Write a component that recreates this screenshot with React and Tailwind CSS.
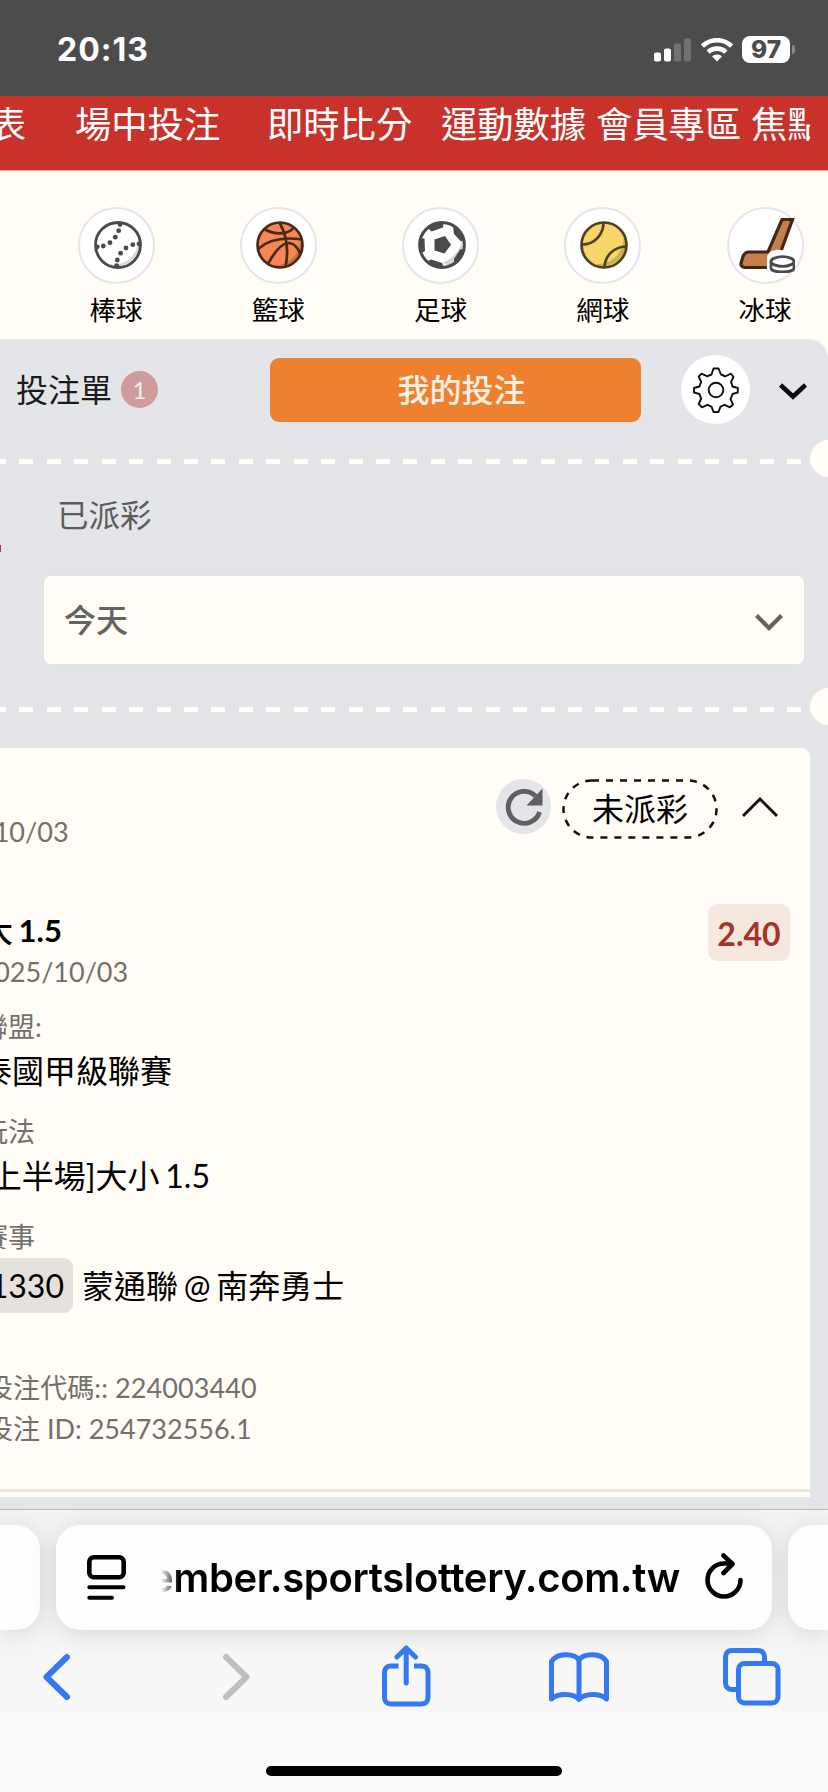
const navItems = [
  { label: "列表", cls: "w-[36px] justify-end mr-[49px]" },
  { label: "場中投注", cls: "w-[145px] mr-[47px]" },
  { label: "即時比分", cls: "w-[145px] mr-[29px]" },
  { label: "運動數據", cls: "w-[145px] mr-[10px]" },
  { label: "會員專區", cls: "w-[145px] mr-[10px]" },
  { label: "焦點", cls: "w-[59px]" },
];

const BaseballIcon = () => (
  <svg width="48" height="48" viewBox="0 0 48 48" fill="none">
    <circle cx="24" cy="24" r="22.5" fill="#fff" />
    <path d="M43 12A24 24 0 0 1 12 42A22.5 22.5 0 0 0 43 12Z" fill="#d6d6d6" />
    <circle cx="24" cy="24" r="22.5" stroke="#4a4a4a" strokeWidth="2.8" />
    <g fill="#4a4a4a">
      <circle cx="26" cy="3.5" r="2.4" />
      <circle cx="24.7" cy="9.7" r="2.4" />
      <circle cx="21.3" cy="16.2" r="2.4" />
      <circle cx="16" cy="21.7" r="2.4" />
      <circle cx="9.3" cy="25" r="2.4" />
      <circle cx="3.3" cy="25.8" r="2.4" />
      <circle cx="45" cy="22.8" r="2.4" />
      <circle cx="38.8" cy="23.7" r="2.4" />
      <circle cx="32" cy="27" r="2.4" />
      <circle cx="26.6" cy="32.2" r="2.4" />
      <circle cx="23.3" cy="39" r="2.4" />
      <circle cx="22.7" cy="44.6" r="2.4" />
    </g>
  </svg>
);

const BasketballIcon = () => (
  <svg width="48" height="48" viewBox="0 0 48 48" fill="none">
    <circle cx="24" cy="24" r="22.5" fill="#f48753" />
    <path d="M44 14A26 26 0 0 1 14 44A22.5 22.5 0 0 0 44 14Z" fill="#c9703f" />
    <g stroke="#4a2817" strokeWidth="2.7">
      <circle cx="24" cy="24" r="22.5" />
      <path d="M23.5 1.5C30 13 33 29 29.5 46" />
      <path d="M2 28C13 18 29 16 46 18.5" />
      <path d="M12.5 42C18 32 24 23 32 22C39 22 42 28 44.5 33" />
      <path d="M9 8.5C17 13 31 15 38 6.5" />
    </g>
  </svg>
);

const SoccerIcon = () => (
  <svg width="48" height="48" viewBox="0 0 48 48" fill="none">
    <circle cx="24" cy="24" r="22.5" fill="#fff" />
    <path d="M45 18L41 28L34 37L24 42L33 45L44 34Z" fill="#d6d6d6" />
    <circle cx="24" cy="24" r="22.4" stroke="#4a4a4a" strokeWidth="3" />
    <g fill="#4a4a4a">
      <path d="M16.500 18.500L27 15L33 23.800L26.500 32.500L16.500 29.500Z" />
      <path d="M9 6.500L13.500 10.500L25 6.500L25.500 2L17 2Z" />
      <path d="M35 6L36 13L43 20.500L46 19L43 10Z" />
      <path d="M45.500 29L42.500 28L36 38L36 42L42 39Z" />
      <path d="M25.500 45.500L24 42L13 38.500L9.500 40.500L16 46Z" />
      <path d="M2 17L6.500 17.500L7 30L3.500 32L1 25Z" />
    </g>
  </svg>
);

const TennisIcon = () => (
  <svg width="48" height="48" viewBox="0 0 48 48" fill="none">
    <circle cx="24" cy="24" r="22.5" fill="#f8d568" />
    <path d="M43 12A26 26 0 0 1 14 43A22.5 22.5 0 0 0 43 12Z" fill="#cdb055" />
    <g stroke="#4b421f" strokeWidth="2.7">
      <circle cx="24" cy="24" r="22.5" />
      <path d="M23.500 1.500C23.500 13 15 23.500 2 23.500" />
      <path d="M46 25.500C33 26 25 35 24.500 46.500" />
    </g>
  </svg>
);

const HockeyIcon = () => (
  <svg className="shrink-0" width="56" height="56" viewBox="0 0 56 56" fill="none">
    <path
      d="M43 2.500H53.500L36 50.500H6C2.500 50.500 1.500 48 2.200 45.500L4 39.500C5 36.500 7 35 10 35H29Z"
      fill="#c57f4b"
      stroke="#40271a"
      strokeWidth="3.200"
    />
    <path d="M28 41C28 35 35 32 42 33L54 36V56H28Z" fill="#fff" />
    <path d="M32 45V51C32 53.500 37 55 43.500 55S55 53.500 55 51V43" fill="#fff" stroke="#4a4a4a" strokeWidth="2.800" />
    <ellipse cx="43.500" cy="44.500" rx="11.500" ry="4.800" fill="#fff" stroke="#4a4a4a" strokeWidth="2.800" />
  </svg>
);

const sports = [
  { name: "棒球", Icon: BaseballIcon },
  { name: "籃球", Icon: BasketballIcon },
  { name: "足球", Icon: SoccerIcon },
  { name: "網球", Icon: TennisIcon },
  { name: "冰球", Icon: HockeyIcon },
];

const GearIcon = () => (
  <svg width="46" height="46" viewBox="0 0 46 46" fill="none" stroke="#111" strokeWidth="1.9" strokeLinejoin="round">
    <path d="M20.500 1.500H25.500L28 7.500C29.500 8 31 8.500 32 9.500L38 6.700L40.500 10L38 15C38.700 16.500 39.300 18 39.500 19.500L44.800 21V25.500L39.500 27C39 29 38.500 30.500 37.500 32L40 37.500L37 40.300L31.500 37.800C30 38.700 29 39.200 27.500 39.700L25.500 45H20.500L18.500 39.700C17 39.200 15.500 38.700 14.500 37.800L9 40.300L5.700 37L8.200 31.500C7.300 30 6.800 28.500 6.500 27L1 25.500V21L6.500 19.500C6.800 18 7.400 16.500 8.200 15L5.700 9.500L8.500 6.700L14.500 9.300C15.500 8.500 17 8 18.500 7.500Z" />
    <circle cx="23" cy="23" r="7.3" />
  </svg>
);

const StatusBar = () => (
  <div className="h-[96px] bg-[#4c4c4c] flex items-center justify-between pl-[57px] pr-[33px] pt-[3px] text-white">
    <span className="font-['Inter'] font-bold text-[32px] leading-none tracking-[1px]">20:13</span>
    <div className="flex items-center">
      <svg width="38" height="24" viewBox="0 0 38 24">
        <rect x="0" y="14.500" width="7" height="9" rx="2" fill="#fff" />
        <rect x="10" y="10.500" width="7" height="13" rx="2" fill="#fff" />
        <rect x="20" y="5.500" width="7" height="18" rx="2" fill="#717171" />
        <rect x="30" y="0.500" width="7" height="23" rx="2" fill="#717171" />
      </svg>
      <svg className="ml-[8px]" width="34" height="24" viewBox="0 0 34 24" fill="#fff">
        <path d="M17 0C23.300 0 29 2.500 33.200 6.500L30 9.800C26.500 6.500 22 4.600 17 4.600S7.500 6.500 4 9.800L0.800 6.500C5 2.500 10.700 0 17 0Z" />
        <path d="M17 8.300C21 8.300 24.700 9.800 27.500 12.400L24.200 15.700C22.300 13.900 19.800 12.900 17 12.900S11.700 13.900 9.800 15.700L6.500 12.400C9.300 9.800 13 8.300 17 8.300Z" />
        <path d="M17 16.600C18.900 16.600 20.600 17.300 21.900 18.500L17 23.500L12.100 18.500C13.400 17.300 15.100 16.600 17 16.600Z" />
      </svg>
      <div className="ml-[8px] w-[48px] h-[27px] rounded-[8px] bg-white text-[#4c4c4c] flex items-center justify-center font-['Inter'] font-extrabold text-[24.5px] leading-none">
        97
      </div>
      <div className="ml-[2px] w-[3px] h-[9px] rounded-r-full bg-[#8a8a8a]"></div>
    </div>
  </div>
);

const Perforation = () => (
  <div className="h-[37px] shrink-0 flex items-center overflow-hidden">
    <div className="mt-[5px] ml-[-8.500px] w-[811px] h-[5px] shrink-0 bg-[repeating-linear-gradient(to_right,#fffdf5_0_14px,transparent_14px_27.430px)]"></div>
    <div className="ml-[7.500px] w-[37px] h-[37px] shrink-0 rounded-full bg-[#fffdf5]"></div>
  </div>
);

const BetCard = () => (
  <section className="mr-[18px] h-[749px] bg-[#fffdf6] rounded-tr-[9px] flex flex-col">
    <div className="h-[124px] flex pt-[31px] pr-[32px]">
      <span className="ml-[-18.500px] mt-[36px] text-[27px] leading-[34px] text-[#72706c]">/10/03</span>
      <div className="ml-auto flex">
        <div className="w-[55px] h-[55px] rounded-full bg-[#e4e5e8] flex items-center justify-center">
          <svg width="38" height="38" viewBox="0 0 38 38" fill="none">
            <path d="M30.500 8A16 16 0 1 0 34.500 24" stroke="#5f5f61" strokeWidth="4.800" />
            <path d="M37.500 0.500V17.500H21.500Z" fill="#5f5f61" />
          </svg>
        </div>
        <svg className="ml-[11px]" width="156" height="60" viewBox="0 0 156 60" fill="none">
          <rect x="1.500" y="1.500" width="153" height="57" rx="28.500" stroke="#111" strokeWidth="2.500" strokeDasharray="7 7" />
          <text x="78" y="41.500" textAnchor="middle" fontSize="32" fill="#000">未派彩</text>
        </svg>
        <svg className="ml-[24px] mt-[17px]" width="36" height="22" viewBox="0 0 36 22" fill="none" stroke="#111" strokeWidth="3">
          <path d="M1 20L18 3L35 20" />
        </svg>
      </div>
    </div>
    <div className="flex justify-between pr-[20px] pt-[32px] h-[118px]">
      <div className="ml-[-18px]">
        <p className="text-[31px] leading-[40px] font-bold text-black mt-[6px] [word-spacing:-2px]">
          <span className="font-medium">大</span> 1.5
        </p>
        <p className="ml-[-3.500px] mt-[2px] text-[27px] leading-[40px] text-[#72706c]">2025/10/03</p>
      </div>
      <div className="w-[82px] h-[57px] rounded-[9px] bg-[#f5e8df] text-[#a83226] font-bold text-[32px] leading-[59px] text-center">
        2.40
      </div>
    </div>
    <dl className="ml-[-20px] flex flex-col whitespace-nowrap [word-spacing:-2.500px]">
      <dt className="ml-[1px] text-[27px] leading-[40px] mt-[17px] text-[#72706c]">聯盟:</dt>
      <dd className="text-[32px] leading-[48px] text-black">泰國甲級聯賽</dd>
      <dt className="ml-[1px] text-[27px] leading-[40px] mt-[17px] text-[#72706c]">玩法</dt>
      <dd className="text-[32px] leading-[48px] text-black">[上半場]大小 1.5</dd>
      <dt className="ml-[1px] text-[27px] leading-[40px] mt-[17px] text-[#72706c]">賽事</dt>
      <dd className="mt-[1px] text-[32px] leading-[55px] text-black flex">
        <span className="w-[93px] rounded-[9px] bg-[#e5e2dd] text-right pr-[9px]">1330</span>
        <span className="ml-[9px]">蒙通聯 @ 南奔勇士</span>
      </dd>
    </dl>
    <div className="ml-[-14px] mt-[54px] text-[27px] leading-[41px] text-[#72706c] whitespace-nowrap">
      <p className="tracking-[0.080px]">投注代碼:: 224003440</p>
      <p>投注 ID: 254732556.1</p>
    </div>
    <div className="mt-auto mb-[5px] h-[3px] bg-[#e8e5de]"></div>
  </section>
);

const BrowserBar = () => (
  <footer className="h-[283px] border-t border-[#b9babb] bg-gradient-to-b from-[#f3f3f3] to-[#fafafa] flex flex-col">
    <div className="mt-[15px] h-[105px] flex gap-[16px]">
      <div className="w-[40px] rounded-r-[24px] bg-[#fdfdfd] shadow-[0_4px_24px_rgba(0,0,0,0.130)]"></div>
      <div className="w-[716px] rounded-[24px] bg-[#fdfdfd] shadow-[0_4px_24px_rgba(0,0,0,0.130)] flex items-center pl-[31px]">
        <svg width="39" height="45" viewBox="0 0 39 45" fill="none" stroke="#000" strokeLinecap="round">
          <rect x="2.300" y="2.300" width="34.400" height="20" rx="4.500" strokeWidth="4.600" />
          <path d="M2.300 32.300H36.500M2.300 42.800H25" strokeWidth="4" />
        </svg>
        <div className="ml-[35px] w-[519px] overflow-hidden flex justify-end whitespace-nowrap font-['Inter'] font-semibold text-[40px] leading-[54px] tracking-[-0.350px] text-black [mask-image:linear-gradient(to_right,transparent_0,black_18px)]">
          member.sportslottery.com.tw
        </div>
        <svg className="ml-[25px] mt-[-3px]" width="39" height="46" viewBox="0 0 39 46" fill="none" stroke="#000" strokeWidth="4.600" strokeLinecap="round" strokeLinejoin="round">
          <path d="M35.500 27A16.500 16.500 0 1 1 19 10.500H27" />
          <path d="M18.500 2.500L27.500 11L18.500 20" />
        </svg>
      </div>
      <div className="w-[40px] rounded-l-[24px] bg-[#fdfdfd] shadow-[0_4px_24px_rgba(0,0,0,0.130)]"></div>
    </div>
    <div className="mt-[1px] h-[92px] flex items-center pl-[42px] text-[#3478f6]">
      <svg width="29" height="48" viewBox="0 0 29 48" fill="none" stroke="currentColor" strokeWidth="6" strokeLinecap="round" strokeLinejoin="round">
        <path d="M25 4L4.500 24L25 44" />
      </svg>
      <svg className="ml-[151px]" width="29" height="48" viewBox="0 0 29 48" fill="none" stroke="#bfbfbf" strokeWidth="6" strokeLinecap="round" strokeLinejoin="round">
        <path d="M4 4L24.500 24L4 44" />
      </svg>
      <svg className="ml-[131px] mt-[-2px]" width="49" height="62" viewBox="0 0 49 62" fill="none" stroke="currentColor" strokeWidth="5" strokeLinecap="round" strokeLinejoin="round">
        <path d="M16.500 21H9C5 21 2.500 23.500 2.500 27.500V52.500C2.500 56.500 5 59 9 59H39.500C43.500 59 46 56.500 46 52.500V27.500C46 23.500 43.500 21 39.500 21H32" strokeLinecap="butt" />
        <path d="M24.200 38V4M15 12L24.200 3L33.500 12" />
      </svg>
      <svg className="ml-[118px] mt-[1px]" width="60" height="52" viewBox="0 0 60 52" fill="none" stroke="currentColor" strokeWidth="5" strokeLinejoin="round">
        <path d="M30 8C25 1 8 0.500 2.500 9.500V47C9 41 24 41 30 47.500C36 41 51 41 57.500 47V9.500C52 0.500 35 1 30 8V47" />
      </svg>
      <svg className="ml-[114px]" width="58" height="58" viewBox="0 0 58 58" fill="none" stroke="currentColor" strokeWidth="5">
        <path d="M13 41.500H9C5 41.500 2.500 39 2.500 35V9C2.500 5 5 2.500 9 2.500H35C39 2.500 41.500 5 41.500 9V13" />
        <rect x="15.500" y="15.500" width="39.500" height="39.500" rx="6" />
      </svg>
    </div>
    <div className="mx-auto mt-[43px] w-[296px] h-[10px] rounded-full bg-black"></div>
  </footer>
);

export default function App() {
  return (
    <div className="w-[828px] h-[1792px] overflow-hidden flex flex-col bg-[#fffdf6] font-['Lato','Noto_Sans_CJK_TC',sans-serif]">
      <StatusBar />

      <nav className="h-[75px] bg-[#c8322b] border-b border-[#e9a9a0] flex overflow-hidden text-white text-[36.3px] leading-[56px] whitespace-nowrap">
        <div className="flex w-[820px] overflow-hidden ml-[-10px] shrink-0">
          {navItems.map((item) => (
            <span key={item.label} className={`flex shrink-0 overflow-hidden ${item.cls}`}>
              {item.label}
            </span>
          ))}
        </div>
      </nav>

      <div className="h-[168px] flex ml-[35px] pt-[36px]">
        {sports.map(({ name, Icon }) => (
          <div key={name} className="w-[162.250px] shrink-0 flex flex-col items-center">
            <div className="w-[77px] h-[77px] rounded-full bg-white border-2 border-[#e6e6e8] flex items-center justify-center pl-[3px] pb-[2px]">
              <Icon />
            </div>
            <span className="mt-[6px] text-[26.6px] leading-[40px] text-black">{name}</span>
          </div>
        ))}
      </div>

      <main className="h-[1170px] bg-[#e4e5e8] rounded-tr-[20px] flex flex-col">
        <div className="h-[101px] flex items-center pl-[16px]">
          <span className="text-[32px] leading-[48px] text-[#1b1b1b]">投注單</span>
          <span className="ml-[9px] w-[37px] h-[37px] rounded-full bg-[#cf9b9c] text-[#f5eeee] text-[24px] leading-[37px] text-center">1</span>
          <button className="ml-[112px] w-[371px] h-[64px] rounded-[9px] bg-[#ee8130] text-[#fdf1e3] text-[32px] leading-none font-medium pl-[12px]">
            我的投注
          </button>
          <div className="ml-[40px] w-[69px] h-[69px] rounded-full bg-white flex items-center justify-center">
            <GearIcon />
          </div>
          <svg className="ml-[29px] mt-[4px]" width="28" height="17" viewBox="0 0 28 17" fill="none" stroke="#0c0c0c" strokeWidth="4.600">
            <path d="M1.500 2L14 13.500L26.500 2" />
          </svg>
        </div>

        <Perforation />

        <div className="h-[211px]">
          <div className="h-[70px] pt-[14px] pl-[57px] text-[31.5px] leading-[48px] text-[#5c5c5e]">已派彩</div>
          <div className="w-[1px] h-[7px] mt-[-2px] bg-[#b8322b]"></div>
          <div className="mt-[23px] ml-[43px] w-[762px] h-[90px] rounded-[8px] border border-[#e8e4da] bg-[#fffdf6] flex items-center justify-between pl-[20px] pr-[21px]">
            <span className="text-[32px] leading-[48px] font-medium text-[#65635f]">今天</span>
            <svg className="mt-[4px]" width="28" height="17" viewBox="0 0 28 17" fill="none" stroke="#65635f" strokeWidth="4.200">
              <path d="M1.500 1.500L14 14L26.500 1.500" />
            </svg>
          </div>
        </div>

        <Perforation />

        <div className="pt-[23px]">
          <BetCard />
        </div>
      </main>

      <BrowserBar />
    </div>
  );
}
